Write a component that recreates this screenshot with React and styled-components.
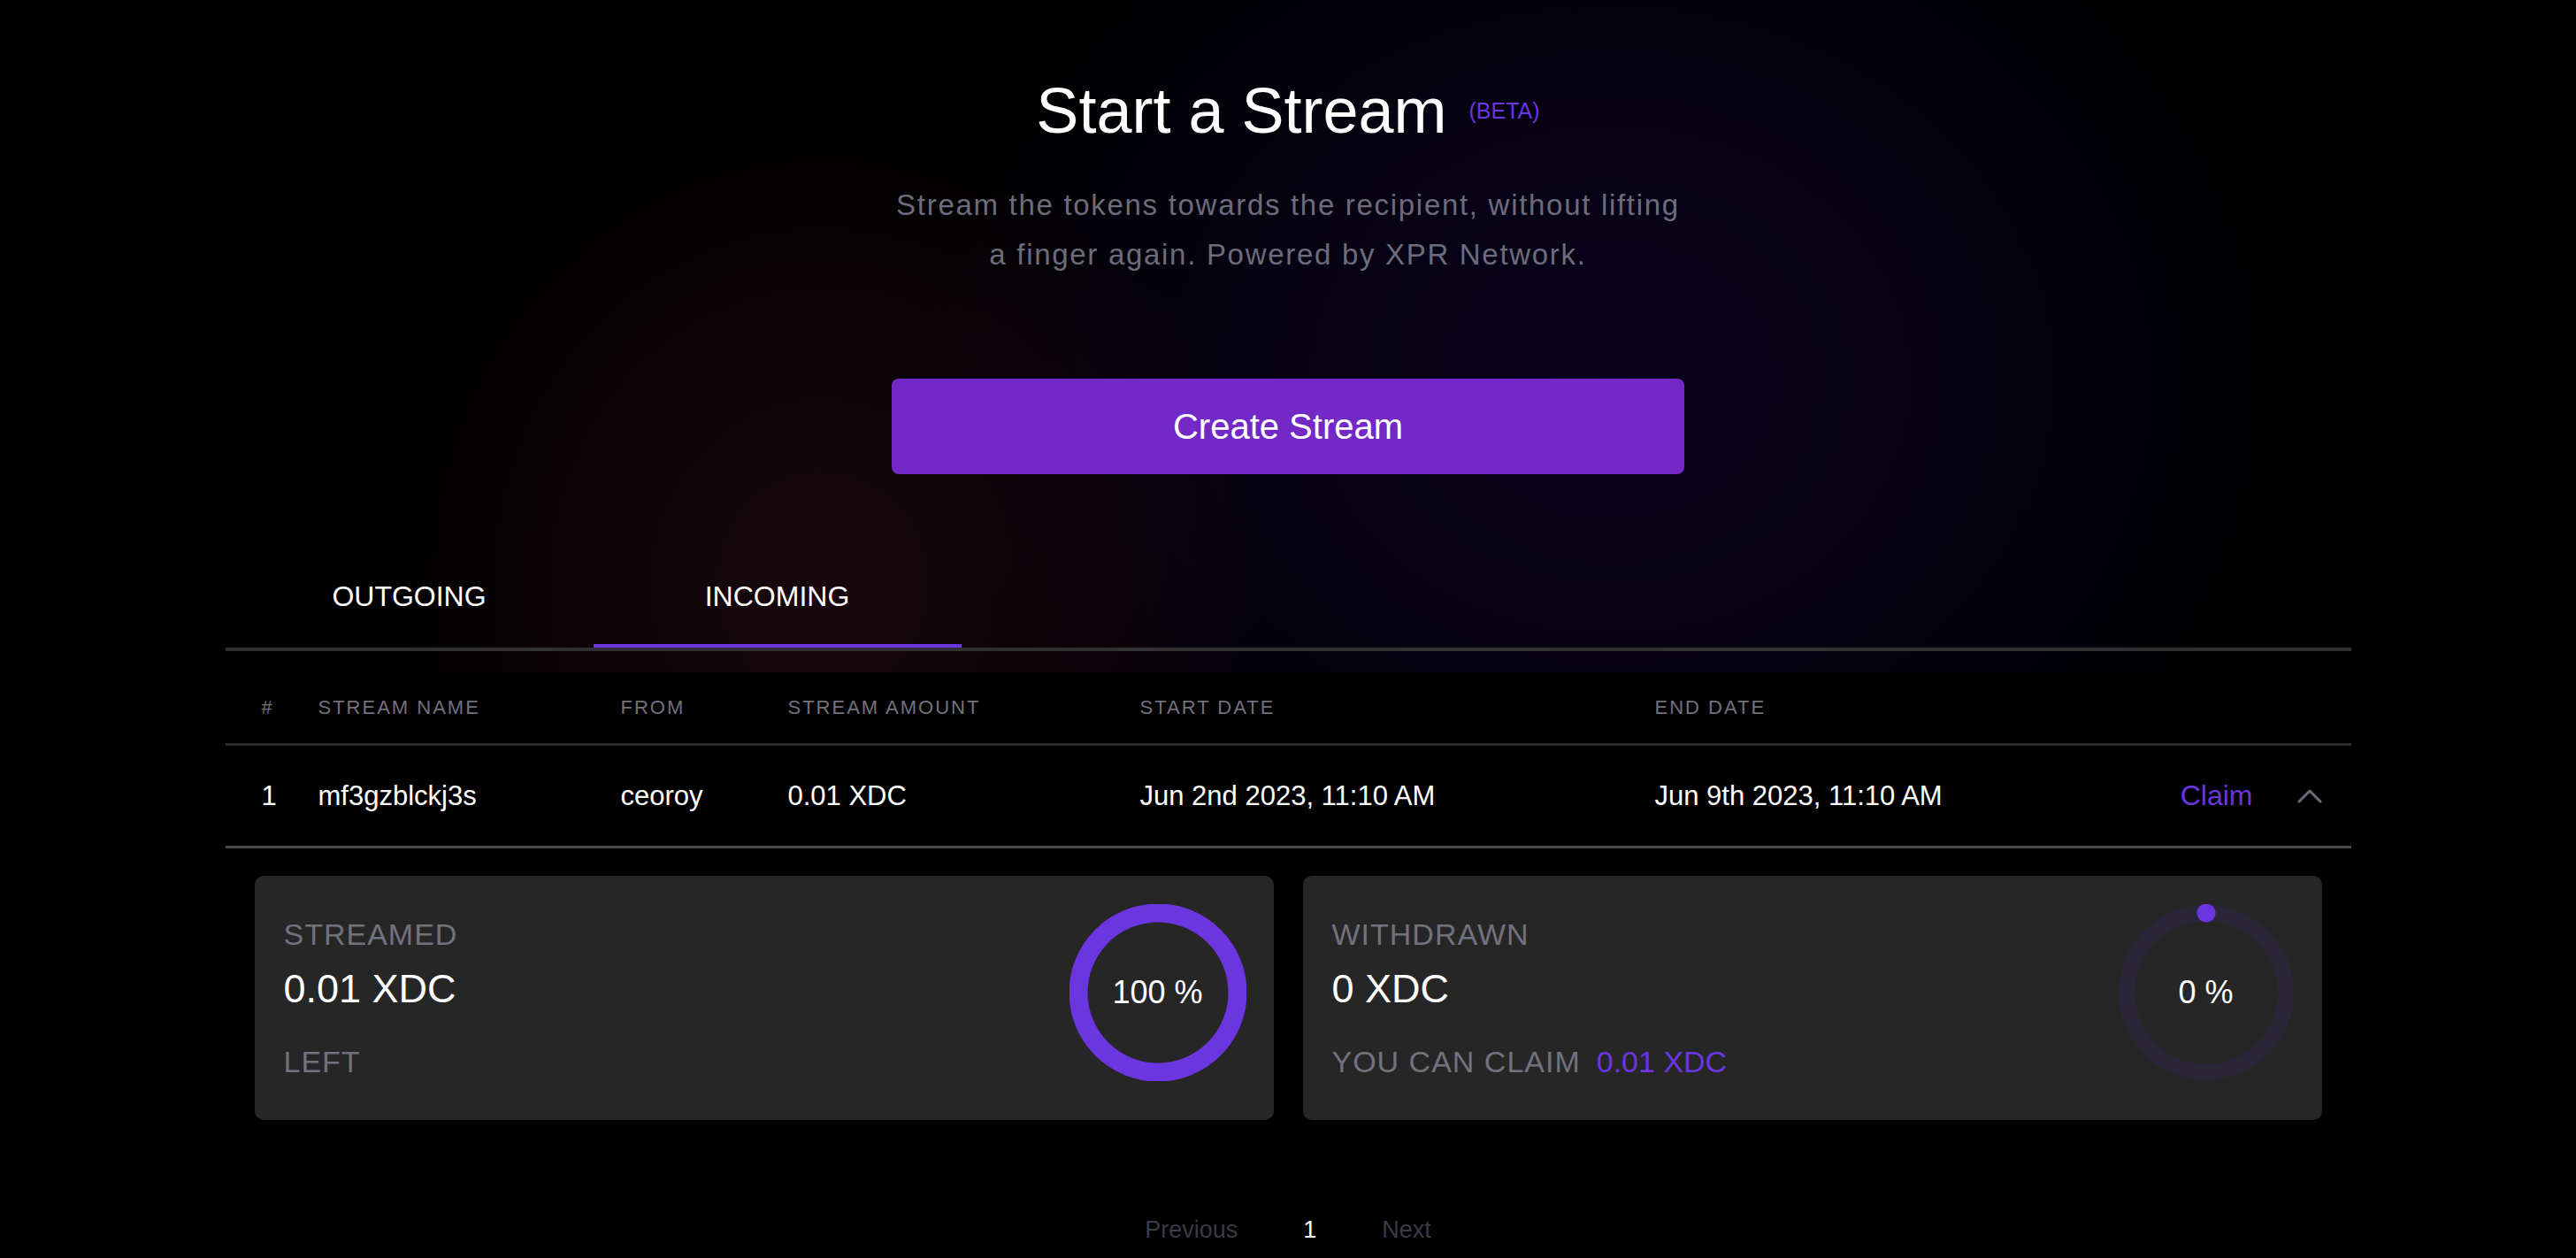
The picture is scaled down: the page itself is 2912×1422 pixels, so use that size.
import React from 'react';
import styled, {createGlobalStyle} from 'styled-components';

const PURPLE = '#6b35e0';
const MUTED = '#72727e';

const GlobalStyle = createGlobalStyle`
    html, body {
        margin: 0;
        padding: 0;
        background: #000;
        color: #fff;
        font-family: "Liberation Sans", Arial, sans-serif;
    }
`;

const Page = styled.div`
    min-height: 1422px;
    background: #000;
`;

const Hero = styled.section`
    padding: 89px 0 24px;
    background:
        radial-gradient(ellipse 500px 540px at 930px 660px, rgba(26, 8, 15, 0.95), rgba(18, 6, 11, 0.65) 55%, transparent 100%),
        radial-gradient(ellipse 780px 660px at 1820px 430px, rgba(10, 3, 30, 0.95), rgba(8, 3, 24, 0.7) 55%, transparent 100%),
        #000;
    display: flex;
    flex-direction: column;
    align-items: center;
`;

const Title = styled.h1`
    margin: 0;
    font-size: 72px;
    line-height: 72px;
    font-weight: 400;
    color: #fff;
`;

const Beta = styled.span`
    margin-left: 25px;
    font-size: 25px;
    color: ${PURPLE};
    vertical-align: 16px;
`;

const Subtitle = styled.p`
    margin: 43px 0 0;
    font-size: 33px;
    line-height: 56px;
    letter-spacing: 1.7px;
    color: #6c6c7c;
    text-align: center;
`;

const CreateButton = styled.button`
    margin-top: 112px;
    width: 896px;
    height: 108px;
    border: none;
    border-radius: 8px;
    background: #7229c6;
    color: #fff;
    font-family: inherit;
    font-size: 40px;
    cursor: pointer;
`;

const Container = styled.div`
    width: 2403px;
    margin: 0 auto;
`;

const TabBar = styled.div`
    margin-top: 84px;
    width: 2403px;
    display: flex;
    border-bottom: 4px solid #303030;
`;

const Tab = styled.div`
    width: 416px;
    padding: 30px 0;
    text-align: center;
    font-size: 32px;
    line-height: 48px;
    color: #fff;
    border-bottom: 4px solid ${p => (p.$active ? PURPLE : 'transparent')};
`;

const GridRow = styled.div`
    display: grid;
    grid-template-columns: 64px 342px 189px 398px 582px 1fr auto;
    align-items: center;
    padding: 0 33px 0 41px;
`;

const HeadRow = styled(GridRow)`
    padding-top: 23px;
    padding-bottom: 24px;
    border-bottom: 3px solid #2c2c2c;
    font-size: 22px;
    line-height: 33px;
    letter-spacing: 2px;
    color: ${MUTED};
`;

const DataRow = styled(GridRow)`
    padding-top: 34px;
    padding-bottom: 34px;
    border-bottom: 3px solid #4a4a4e;
    font-size: 31px;
    line-height: 45px;
    color: #fff;
`;

const Actions = styled.div`
    display: flex;
    align-items: center;
    gap: 50px;
`;

const ClaimLink = styled.span`
    color: ${PURPLE};
    font-size: 32px;
    cursor: pointer;
`;

const Panel = styled.div`
    display: grid;
    grid-template-columns: 1fr 1fr;
    gap: 33px;
    padding: 31px 33px 32px;
`;

const Card = styled.div`
    height: 276px;
    box-sizing: border-box;
    padding: 0 31px 0 33px;
    border-radius: 10px;
    background: #262626;
    display: flex;
    align-items: center;
    justify-content: space-between;
`;

const CardText = styled.div`
    display: flex;
    flex-direction: column;
`;

const Label = styled.div`
    font-size: 34px;
    line-height: 40px;
    letter-spacing: 1px;
    color: ${MUTED};
    margin-top: ${p => p.$gap || 0}px;
`;

const Value = styled.div`
    margin-top: 15px;
    font-size: 45px;
    line-height: 53px;
    color: #fff;
`;

const Highlight = styled.span`
    margin-left: 18px;
    letter-spacing: 0;
    color: ${PURPLE};
`;

const RingBox = styled.div`
    position: relative;
    width: 200px;
    height: 200px;
    margin-bottom: 12px;
`;

const RingLabel = styled.div`
    position: absolute;
    inset: 0;
    display: flex;
    align-items: center;
    justify-content: center;
    font-size: 36px;
    color: #fff;
`;

const Pagination = styled.div`
    margin-top: 72px;
    display: flex;
    justify-content: center;
    gap: 74px;
    font-size: 27px;
    line-height: 40px;
`;

const PageItem = styled.span`
    color: ${p => (p.$current ? '#fff' : '#3a3948')};
`;

const ChevronUp = () => (
    <svg width="28" height="16" viewBox="0 0 28 16" fill="none">
        <polyline points="2,14 14,2 26,14" stroke="#6b6b78" strokeWidth="3" strokeLinecap="round" strokeLinejoin="round"/>
    </svg>
);

const Ring = ({percent}) => {
    const r = 90;
    const len = 2 * Math.PI * r;
    return (
        <RingBox>
            <svg width="200" height="200" viewBox="0 0 200 200">
                <circle cx="100" cy="100" r={r} fill="none" stroke="#2b2637" strokeWidth="18"/>
                {percent > 0 ? (
                    <circle
                        cx="100" cy="100" r={r} fill="none" stroke={PURPLE} strokeWidth="21"
                        strokeDasharray={`${(len * percent) / 100} ${len}`}
                        transform="rotate(-90 100 100)"
                    />
                ) : (
                    <circle cx="100" cy="10" r="10.5" fill={PURPLE}/>
                )}
            </svg>
            <RingLabel>{percent} %</RingLabel>
        </RingBox>
    );
};

const stream = {
    id: 1,
    name: 'mf3gzblckj3s',
    from: 'ceoroy',
    amount: '0.01 XDC',
    start: 'Jun 2nd 2023, 11:10 AM',
    end: 'Jun 9th 2023, 11:10 AM',
};

export default function App() {
    return (
        <Page>
            <GlobalStyle/>
            <Hero>
                <Title>Start a Stream<Beta>(BETA)</Beta></Title>
                <Subtitle>
                    Stream the tokens towards the recipient, without lifting<br/>
                    a finger again. Powered by XPR Network.
                </Subtitle>
                <CreateButton>Create Stream</CreateButton>
                <TabBar>
                    <Tab>OUTGOING</Tab>
                    <Tab $active>INCOMING</Tab>
                </TabBar>
            </Hero>
            <Container>
                <HeadRow>
                    <span>#</span>
                    <span>STREAM NAME</span>
                    <span>FROM</span>
                    <span>STREAM AMOUNT</span>
                    <span>START DATE</span>
                    <span>END DATE</span>
                    <span/>
                </HeadRow>
                <DataRow>
                    <span>{stream.id}</span>
                    <span>{stream.name}</span>
                    <span>{stream.from}</span>
                    <span>{stream.amount}</span>
                    <span>{stream.start}</span>
                    <span>{stream.end}</span>
                    <Actions>
                        <ClaimLink>Claim</ClaimLink>
                        <ChevronUp/>
                    </Actions>
                </DataRow>
                <Panel>
                    <Card>
                        <CardText>
                            <Label>STREAMED</Label>
                            <Value>0.01 XDC</Value>
                            <Label $gap={36}>LEFT</Label>
                        </CardText>
                        <Ring percent={100}/>
                    </Card>
                    <Card>
                        <CardText>
                            <Label>WITHDRAWN</Label>
                            <Value>0 XDC</Value>
                            <Label $gap={36}>YOU CAN CLAIM<Highlight>0.01 XDC</Highlight></Label>
                        </CardText>
                        <Ring percent={0}/>
                    </Card>
                </Panel>
                <Pagination>
                    <PageItem>Previous</PageItem>
                    <PageItem $current>1</PageItem>
                    <PageItem>Next</PageItem>
                </Pagination>
            </Container>
        </Page>
    );
}
